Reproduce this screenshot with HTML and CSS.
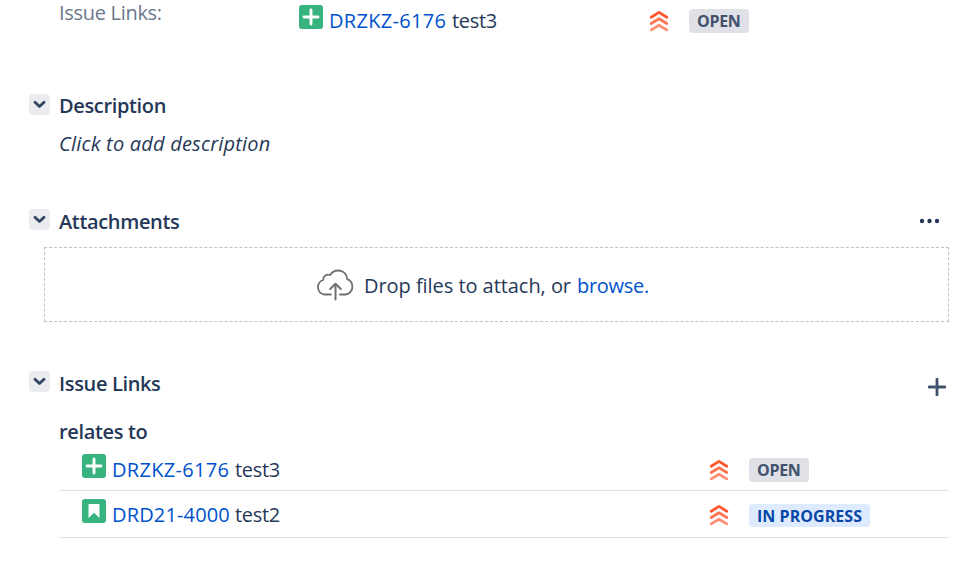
FILE: index.html
```html
<!DOCTYPE html>
<html lang="en">
<head>
  <meta charset="UTF-8" />
  <meta name="viewport" content="width=device-width, initial-scale=1.0">
  <title>Issue</title>
  <link rel="stylesheet" href="styles.css">
</head>
<body>

  <!-- Shared icons -->
  <svg class="sprite" width="0" height="0">
    <symbol id="chevron" viewBox="0 0 21 21">
      <path d="M6 8.2l4.5 4.4L15 8.2" fill="none" stroke="#344563" stroke-width="2.8" stroke-linecap="round" stroke-linejoin="round" />
    </symbol>
    <symbol id="type-new" viewBox="0 0 24 24">
      <rect width="24" height="24" rx="3" fill="#36b37e" />
      <path d="M12 5v14M5 12h14" stroke="#fff" stroke-width="2.9" stroke-linecap="round" />
    </symbol>
    <symbol id="type-story" viewBox="0 0 24 24">
      <rect width="24" height="24" rx="3" fill="#36b37e" />
      <path d="M7.5 5h9q1 0 1 1v13L12 13.8 6.5 19V6q0-1 1-1z" fill="#fff" />
    </symbol>
    <symbol id="priority" viewBox="0 0 20 22">
      <g fill="none" stroke-width="2.8" stroke-linecap="round" stroke-linejoin="round">
        <path d="M2.2 7.2L10 2.4l7.8 4.8" stroke="#ff5630" />
        <path d="M2.2 13.5L10 8.8l7.8 4.7" stroke="#ff7452" />
        <path d="M2.2 19.9L10 15.2l7.8 4.7" stroke="#ff8f73" />
      </g>
    </symbol>
  </svg>

  <div class="field">
    <span class="field-label">Issue Links:</span>
    <div class="link-row">
      <svg class="type-icon"><use href="#type-new" /></svg>
      <a class="issue-key" href="#">DRZKZ-6176</a>
      <span class="summary">test3</span>
      <svg class="priority"><use href="#priority" /></svg>
      <span class="lozenge">OPEN</span>
    </div>
  </div>

  <section class="description">
    <div class="heading">
      <button class="toggle"><svg><use href="#chevron" /></svg></button>
      <h4>Description</h4>
    </div>
    <p class="placeholder">Click to add description</p>
  </section>

  <section class="attachments">
    <div class="heading">
      <button class="toggle"><svg><use href="#chevron" /></svg></button>
      <h4>Attachments</h4>
      <svg class="more" viewBox="0 0 22 6">
        <g fill="#253858">
          <circle cx="3" cy="3" r="2.2" />
          <circle cx="10.5" cy="3" r="2.2" />
          <circle cx="18" cy="3" r="2.2" />
        </g>
      </svg>
    </div>
    <div class="dropzone">
      <svg class="cloud" viewBox="0 0 38 34">
        <g fill="none" stroke="#707070" stroke-width="1.8" stroke-linecap="round" stroke-linejoin="round">
          <path d="M15 26.5H9C4.8 26.5 2 23.2 2 19.3c0-3.5 2-6.3 5.2-7.3C7 8.2 10.8 5.7 14.2 7 16 4 19 2.5 22.3 2.5c5 0 8.6 3.7 8.9 8.6 3.2 1.2 5.2 4 5.2 7.7 0 4.2-3.1 7.7-7.2 7.7h-5.2" />
          <path d="M19.5 31.5V16M14.2 21l5.3-5.3 5.3 5.3" stroke-width="2" />
        </g>
      </svg>
      <span class="drop-text">Drop files to attach, or</span>
      <a class="browse" href="#">browse.</a>
    </div>
  </section>

  <section class="links">
    <div class="heading">
      <button class="toggle"><svg><use href="#chevron" /></svg></button>
      <h4>Issue Links</h4>
      <svg class="add" viewBox="0 0 18 18">
        <path d="M9 1v16M1 9h16" stroke="#42526e" stroke-width="2.8" stroke-linecap="round" />
      </svg>
    </div>
    <h5 class="relation">relates to</h5>
    <div class="link-row first">
      <svg class="type-icon"><use href="#type-new" /></svg>
      <a class="issue-key" href="#">DRZKZ-6176</a>
      <span class="summary">test3</span>
      <svg class="priority"><use href="#priority" /></svg>
      <span class="lozenge">OPEN</span>
    </div>
    <div class="link-row last">
      <svg class="type-icon"><use href="#type-story" /></svg>
      <a class="issue-key" href="#">DRD21-4000</a>
      <span class="summary">test2</span>
      <svg class="priority"><use href="#priority" /></svg>
      <span class="lozenge progress">IN PROGRESS</span>
    </div>
  </section>

</body>
</html>
```

FILE: styles.css
```css
* {
  box-sizing: border-box;
}

body {
  margin: 0;
  height: 579px;
  overflow: hidden;
  background: #fff;
  color: #253858;
  font-family: 'Segoe UI', 'Open Sans', 'Noto Sans', sans-serif;
  font-size: 20px;
  line-height: 30px;
  letter-spacing: -0.3px;
  white-space: nowrap;
}

a {
  color: #0052cc;
  text-decoration: none;
}

svg {
  display: block;
  flex: none;
}

.sprite {
  position: absolute;
}

/* Top field */
.field {
  display: flex;
  height: 94px;
  padding-left: 59px;
}

.field-label {
  width: 240px;
  padding-top: 1px;
  color: #6b778c;
  line-height: 24px;
}

.field .link-row {
  width: 465px;
  height: 41px;
  padding-left: 0;
  margin: 0;
  border: 0;
}

.field .type-icon {
  margin-top: -8px;
}

.field .summary {
  width: 197px;
}

/* Collapsible sections */
.heading {
  display: flex;
  height: 21px;
  padding: 0 24px 0 29px;
}

.toggle {
  width: 21px;
  height: 21px;
  margin-right: 9px;
  padding: 0;
  border: 0;
  border-radius: 4px;
  background: #ebecf0;
}

.toggle svg {
  width: 21px;
  height: 21px;
}

h4,
h5 {
  margin: 0;
  color: #253858;
  font-size: 20px;
  font-weight: 600;
  letter-spacing: -0.35px;
}

h4 {
  margin-top: -2px;
}

.description {
  height: 115px;
}

.description h4 {
  margin-top: -3px;
}

.placeholder {
  margin: 14px 0 0 59px;
  font-style: italic;
  letter-spacing: 0.2px;
}

.attachments {
  height: 162px;
}

.more {
  width: 22px;
  height: 6px;
  margin: 9px -1px 0 auto;
}

.dropzone {
  display: flex;
  align-items: center;
  width: 905px;
  height: 75px;
  margin: 17px 0 0 44px;
  padding-left: 271px;
  border: 1px dashed #c1c1c1;
}

.cloud {
  width: 38px;
  height: 34px;
  margin-right: 10px;
}

.drop-text {
  width: 213px;
  padding-top: 2px;
  letter-spacing: -0.05px;
}

.browse {
  padding-top: 2px;
}

.add {
  width: 18px;
  height: 18px;
  margin: 7px -6px 0 auto;
}

.relation {
  height: 29px;
  margin: 25px 0 0 59px;
}

/* Linked issues */
.link-row {
  display: flex;
  align-items: center;
  width: 890px;
  height: 45px;
  margin-left: 59px;
  padding-left: 23px;
  border-bottom: 1px solid #dfe1e6;
}

.link-row.first {
  padding-top: 4px;
}

.link-row.last {
  height: 47px;
  padding-top: 2px;
}

.type-icon {
  width: 24px;
  height: 24px;
  margin: -8px 6px 0 0;
}

.issue-key {
  width: 123px;
  letter-spacing: 0.3px;
}

.last .issue-key {
  letter-spacing: 0.15px;
}

.summary {
  width: 474px;
}

.priority {
  width: 20px;
  height: 22px;
  margin-right: 20px;
}

.lozenge {
  height: 24px;
  padding: 0 8px;
  border-radius: 4px;
  background: #dfe1e6;
  color: #42526e;
  font-size: 16px;
  font-weight: 700;
  line-height: 24px;
}

.progress {
  height: 23px;
  background: #deebff;
  color: #0747a6;
  letter-spacing: 0.05px;
}
```
